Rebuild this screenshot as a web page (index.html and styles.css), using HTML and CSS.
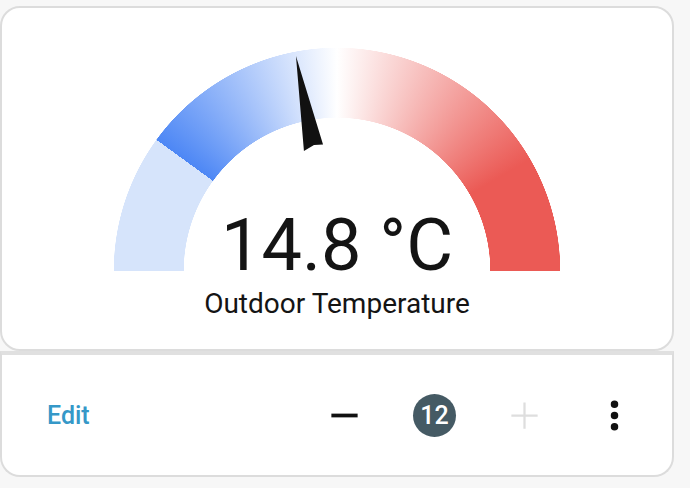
FILE: index.html
```html
<!DOCTYPE html>
<html>
<head>
<meta charset="utf-8">
<link rel="stylesheet" href="styles.css">
</head>
<body>
<div class="page">
  <div class="card gauge-card">
    <div class="gauge">
      <div class="ring"></div>
      <svg class="needle" width="446" height="223" viewBox="0 0 446 223">
        <path transform="translate(223 223) rotate(-10.8)" d="M0,-219 L10,-127 L1,-128 L-10,-124 Z" fill="#111"/>
      </svg>
      <div class="value">14.8 °C</div>
    </div>
    <div class="name">Outdoor Temperature</div>
  </div>
  <div class="card toolbar">
    <a class="edit">Edit</a>
    <div class="controls">
      <span class="btn">
        <svg width="45" height="45" viewBox="0 0 24 24"><path d="M19,13H5V11H19V13Z" fill="#111"/></svg>
      </span>
      <span class="btn"><span class="badge">12</span></span>
      <span class="btn">
        <svg width="45" height="45" viewBox="0 0 24 24"><path d="M19,12.6H12.6V19H11.4V12.6H5V11.4H11.4V5H12.6V11.4H19V12.6Z" fill="#dedede"/></svg>
      </span>
      <span class="btn">
        <svg width="45" height="45" viewBox="0 0 24 24"><path d="M12,16A2,2 0 0,1 14,18A2,2 0 0,1 12,20A2,2 0 0,1 10,18A2,2 0 0,1 12,16M12,10A2,2 0 0,1 14,12A2,2 0 0,1 12,14A2,2 0 0,1 10,12A2,2 0 0,1 12,10M12,4A2,2 0 0,1 14,6A2,2 0 0,1 12,8A2,2 0 0,1 10,6A2,2 0 0,1 12,4Z" fill="#111"/></svg>
      </span>
    </div>
  </div>
</div>
</body>
</html>
```

FILE: styles.css
```css
html, body {
  margin: 0;
  padding: 0;
  background: #f7f7f7;
  font-family: Roboto, "Liberation Sans", sans-serif;
}

.page {
  width: 674px;
  padding-top: 6px;
}

.card {
  background: #ffffff;
  box-sizing: border-box;
  border: 2px solid #dcdcdc;
}

.gauge-card {
  height: 345px;
  border-radius: 20px;
  display: flex;
  flex-direction: column;
  align-items: center;
  padding-top: 40px;
}

.gauge {
  position: relative;
  width: 446px;
  height: 223px;
}

.ring {
  width: 100%;
  height: 100%;
  background: conic-gradient(from 270deg at 50% 100%,
    #d6e4fb 0deg 36deg,
    #4d87f5 36deg,
    #ffffff 90deg,
    #eb5a55 150deg,
    #eb5a55 180deg,
    transparent 180deg);
  -webkit-mask: radial-gradient(circle at 50% 100%, transparent 153px, #000 153.5px, #000 223px, transparent 223.5px);
  mask: radial-gradient(circle at 50% 100%, transparent 153px, #000 153.5px, #000 223px, transparent 223.5px);
}

.needle {
  position: absolute;
  left: 0;
  top: 0;
}

.value {
  position: absolute;
  left: 0;
  right: 0;
  bottom: -4px;
  text-align: center;
  font-size: 72px;
  line-height: 0.8;
  color: #141414;
}

.name {
  margin-top: 17px;
  font-size: 28px;
  line-height: 32px;
  color: #141414;
}

.toolbar {
  height: 126px;
  border-top: 4px solid #e0e0e0;
  border-radius: 0 0 20px 20px;
  display: flex;
  align-items: center;
  padding: 0 35px 0 45px;
}

.edit {
  font-size: 25px;
  font-weight: 500;
  color: #3598c8;
}

.controls {
  margin-left: auto;
  display: flex;
  align-items: center;
  gap: 45px;
}

.btn {
  width: 45px;
  height: 45px;
  display: flex;
  align-items: center;
  justify-content: center;
}

.btn svg {
  display: block;
}

.badge {
  width: 43px;
  height: 43px;
  border-radius: 50%;
  background: #455a64;
  color: #ffffff;
  font-size: 25px;
  font-weight: 500;
  display: flex;
  align-items: center;
  justify-content: center;
}
```
